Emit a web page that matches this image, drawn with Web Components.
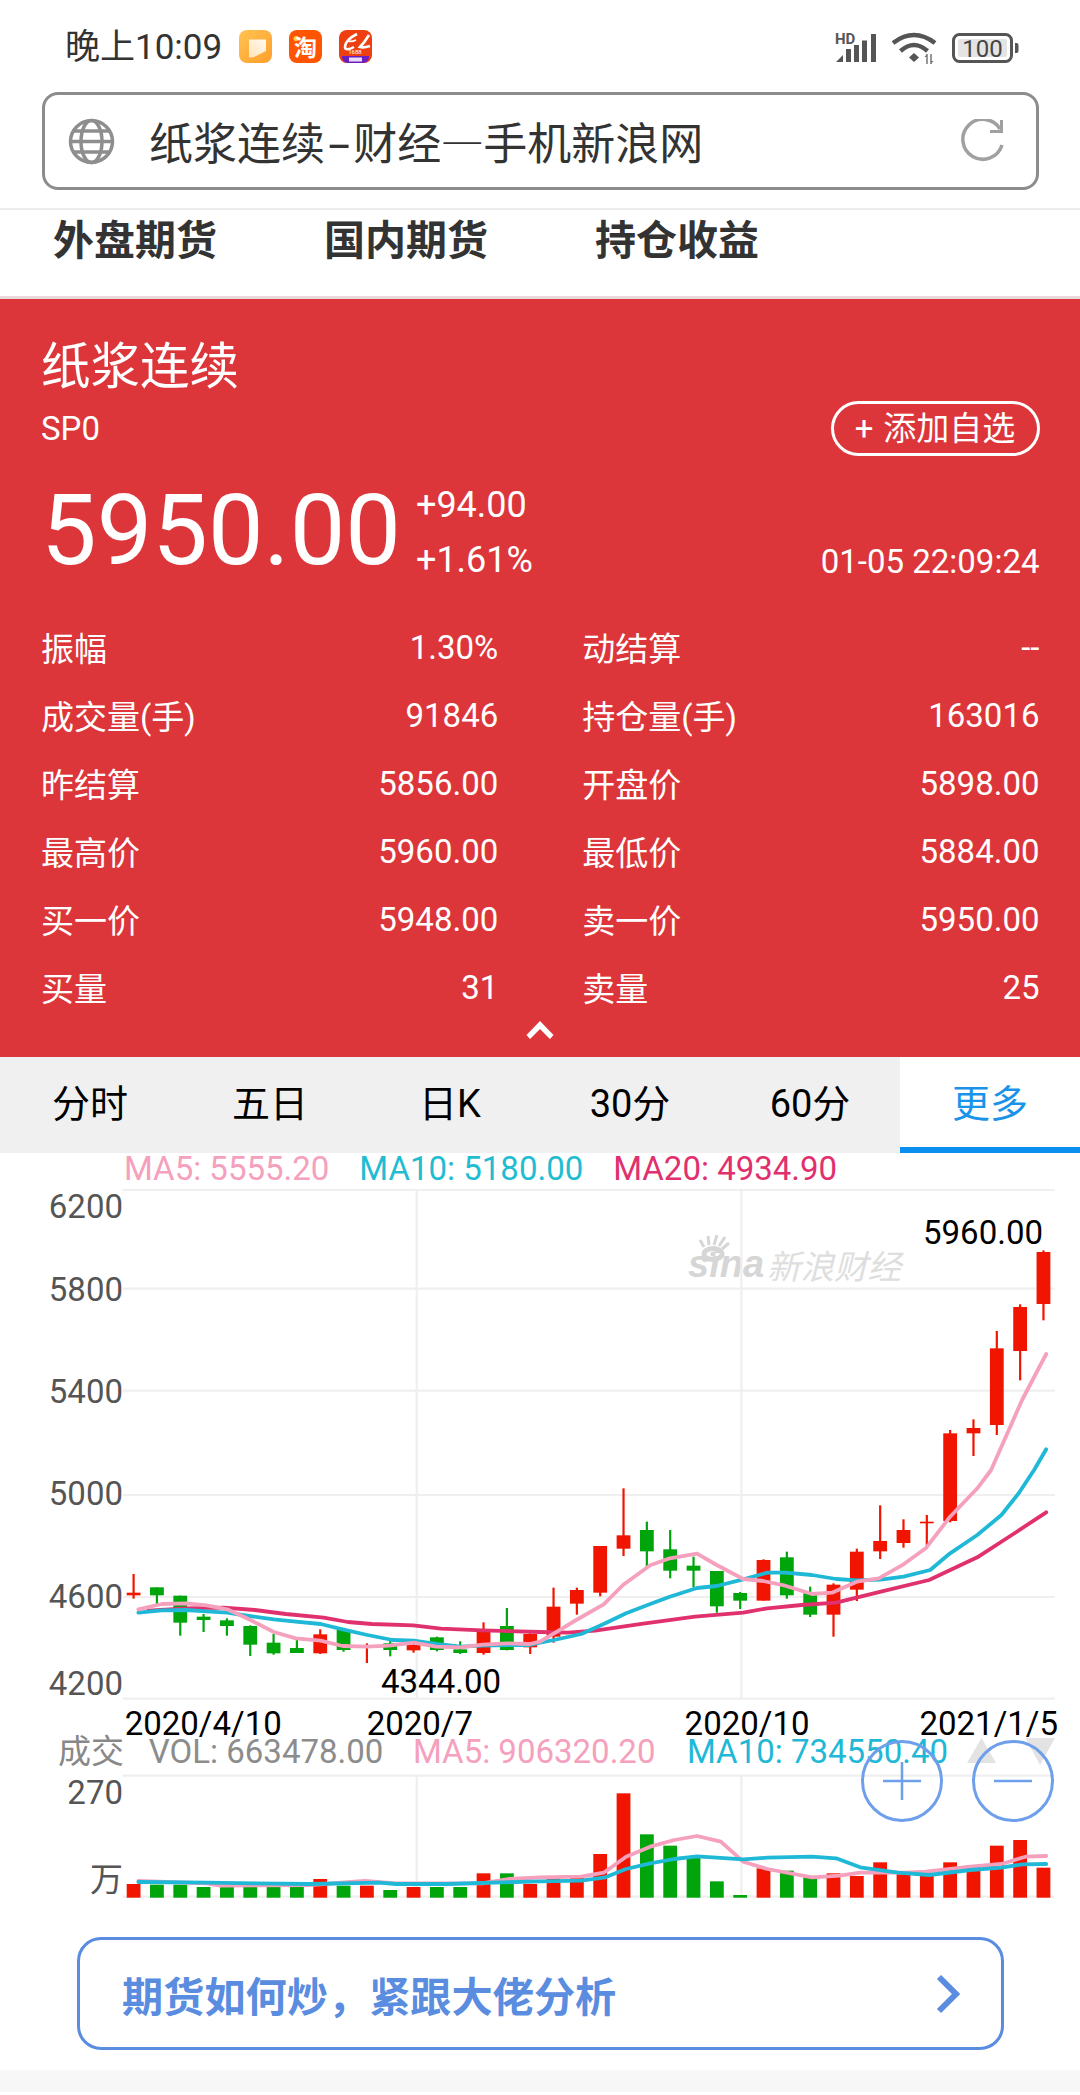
<!DOCTYPE html>
<html lang="zh-CN">
<head>
<meta charset="utf-8">
<title>纸浆连续-财经—手机新浪网</title>
<style>
    html, body {
        margin: 0;
        background: #fff;
        font-family: Roboto, "Noto Sans CJK SC", sans-serif;
    }
    body {
        width: 1080px;
        height: 2095px;
        overflow: hidden;
    }
</style>
</head>
<body>
<status-bar></status-bar>
<address-bar>纸浆连续<span class="dash">-</span>财经<span class="em">—</span>手机新浪网</address-bar>
<market-nav>
    <span>外盘期货</span>
    <span>国内期货</span>
    <span>持仓收益</span>
</market-nav>
<quote-panel>
    <quote-row>振幅<span slot="value">1.30%</span></quote-row>
    <quote-row>动结算<span slot="value">--</span></quote-row>
    <quote-row>成交量(手)<span slot="value">91846</span></quote-row>
    <quote-row>持仓量(手)<span slot="value">163016</span></quote-row>
    <quote-row>昨结算<span slot="value">5856.00</span></quote-row>
    <quote-row>开盘价<span slot="value">5898.00</span></quote-row>
    <quote-row>最高价<span slot="value">5960.00</span></quote-row>
    <quote-row>最低价<span slot="value">5884.00</span></quote-row>
    <quote-row>买一价<span slot="value">5948.00</span></quote-row>
    <quote-row>卖一价<span slot="value">5950.00</span></quote-row>
    <quote-row>买量<span slot="value">31</span></quote-row>
    <quote-row>卖量<span slot="value">25</span></quote-row>
</quote-panel>
<period-tabs>
    <period-tab>分时</period-tab>
    <period-tab>五日</period-tab>
    <period-tab>日K</period-tab>
    <period-tab>30分</period-tab>
    <period-tab>60分</period-tab>
    <period-tab active>更多</period-tab>
</period-tabs>
<kline-chart></kline-chart>
<promo-link>期货如何炒，紧跟大佬分析</promo-link>

<script>
class StatusBar extends HTMLElement
{
    constructor()
    {
        super();
        this.attachShadow({ mode: 'open' });
        this.shadowRoot.innerHTML = `
            <style>
                :host { display: flex; align-items: center; height: 92px; padding: 0 60px 0 65px; box-sizing: border-box; color: #333; }
                .time { font-size: 35px; line-height: 50px; margin: 4px 17px 0 0; }
                .apps { display: flex; gap: 17px; margin-top: 1px; }
                .apps svg { display: block; }
                .right { margin-left: auto; display: flex; align-items: center; gap: 15px; margin-top: 3px; }
                .right svg { display: block; }
                .signal { margin-top: -3px; }
            </style>
            <span class="time">晚上10:09</span>
            <div class="apps">
                <svg width="33" height="33" viewBox="0 0 33 33">
                    <defs><linearGradient id="bk" x1="0" y1="0" x2="1" y2="1"><stop offset="0" stop-color="#ffc352"/><stop offset="1" stop-color="#ff9e2c"/></linearGradient>
                    <linearGradient id="pg" x1="0" y1="1" x2="1" y2="0"><stop offset="0" stop-color="#ffe4b8"/><stop offset="1" stop-color="#fffaf0"/></linearGradient></defs>
                    <rect width="33" height="33" rx="8" fill="url(#bk)"/>
                    <path d="M10 9.500h17v11.500L14 27.500l-4 0z" fill="url(#pg)"/>
                </svg>
                <svg width="33" height="33" viewBox="0 0 33 33">
                    <rect width="33" height="33" rx="8" fill="#ff5500"/>
                    <circle cx="7" cy="8.500" r="2.500" fill="#ffd53c"/>
                    <text x="16.500" y="26" font-size="23" font-weight="700" fill="#fff" text-anchor="middle">淘</text>
                </svg>
                <svg width="33" height="33" viewBox="0 0 33 33">
                    <rect width="33" height="33" rx="8" fill="#ee3f10"/>
                    <path d="M18 4C10 8 6 13 6 17c0 3 4 3 9 0" fill="none" stroke="#fff" stroke-width="2.600"/>
                    <path d="M8 11c4 1 7 0 9-1" fill="none" stroke="#fff" stroke-width="1.800"/>
                    <path d="M30 5c-3 5-6 9-9 12 3 1 7 0 10-1" fill="none" stroke="#fff" stroke-width="2.600"/>
                    <text x="16" y="24" font-size="6" fill="#fff" text-anchor="middle">1688</text>
                    <path d="M3 26h27v1a6 6 0 0 1-6 6H9a6 6 0 0 1-6-6z" fill="#6a1fc0"/>
                    <rect x="10" y="27.500" width="13" height="4" fill="#e9dcf8"/>
                </svg>
            </div>
            <div class="right">
                <svg class="signal" width="42" height="34" viewBox="0 -3 42 34" fill="#555">
                    <text x="0" y="11.500" font-size="15" font-weight="700" fill="#555">HD</text>
                    <path d="M1 30l7-7v7zM11 30V17h5v13zM19 30V13h5v17zM27 30V8.500h5V30zM36 30V2h5v28z"/>
                </svg>
                <svg width="45" height="32" viewBox="0 0 45 32" fill="none" stroke="#555" stroke-width="4.500">
                    <path d="M1 11Q22-5 43 11"/>
                    <path d="M8.500 19Q22 7 35.500 19"/>
                    <path d="M22 21l5 4.500-5 4.500-5-4.500z" fill="#555" stroke="none"/>
                    <path d="M35 22v10M39 22v10" stroke="#777" stroke-width="1.500"/>
                    <path d="M32.500 25l2.500-3v3zM41.500 29l-2.500 3v-3z" fill="#777" stroke="none"/>
                </svg>
                <svg width="68" height="30" viewBox="0 0 68 30">
                    <rect x="1.500" y="1.500" width="58" height="27" rx="6" fill="#fff" stroke="#555" stroke-width="3"/>
                    <rect x="6" y="6" width="49" height="18" rx="2" fill="#e4e4e4"/>
                    <text x="30.500" y="23.500" font-size="24" fill="#444" text-anchor="middle">100</text>
                    <path d="M63 10h1.500a2 2 0 0 1 2 2v6a2 2 0 0 1-2 2H63z" fill="#555"/>
                </svg>
            </div>
        `;
    }
}

class AddressBar extends HTMLElement
{
    constructor()
    {
        super();
        this.attachShadow({ mode: 'open' });
        this.shadowRoot.innerHTML = `
            <style>
                :host { display: block; padding: 0 41px 18px 41.500px; }
                .box {
                    display: flex; align-items: center; height: 98px; box-sizing: border-box;
                    border: 3px solid #8c8c8c; border-radius: 16px; padding: 0 32px 0 23px;
                }
                .box svg { display: block; flex: none; }
                .title { flex: 1; font-size: 44px; line-height: 60px; color: #333; margin-left: 34.500px; padding-top: 3px; white-space: nowrap; }
                ::slotted(.dash) { display: inline-block; margin: 0 8px; transform: scaleX(1.800); }
                ::slotted(.em) { font-family: "Noto Sans CJK SC", sans-serif; margin: 0 -1px; }
            </style>
            <div class="box">
                <svg width="47" height="47" viewBox="0 0 47 47" fill="none" stroke="#8e8e8e" stroke-width="3.500">
                    <circle cx="23.500" cy="23.500" r="21"/>
                    <ellipse cx="23.500" cy="23.500" rx="10.500" ry="21"/>
                    <path d="M2.500 23.500h42M6 13h35M6 34h35"/>
                </svg>
                <span class="title"><slot></slot></span>
                <svg width="45" height="45" viewBox="0 0 45 45" fill="none" stroke="#a0a0a0" stroke-width="3.500">
                    <path d="M41 10A20 20 0 1 0 43 26"/>
                    <path d="M42.500 1v11.500H31" stroke-width="3"/>
                </svg>
            </div>
        `;
    }
}

class MarketNav extends HTMLElement
{
    constructor()
    {
        super();
        this.attachShadow({ mode: 'open' });
        this.shadowRoot.innerHTML = `
            <style>
                :host {
                    display: flex; gap: 107px; height: 86px; padding: 0 0 0 53px;
                    border-top: 2px solid #ececec; border-bottom: 3px solid #e8dada;
                    font-size: 41px; font-weight: 700; line-height: 62px; color: #333;
                }
                ::slotted(span) { display: block; }
            </style>
            <slot></slot>
        `;
    }
}

class QuotePanel extends HTMLElement
{
    constructor()
    {
        super();
        this.attachShadow({ mode: 'open' });
        this.shadowRoot.innerHTML = `
            <style>
                :host { display: block; background: #dd363a; color: #fff; padding: 38px 40.500px 0 41px; height: 758px; box-sizing: border-box; }
                .title { font-size: 49.500px; line-height: 60px; }
                .code-row { display: flex; justify-content: space-between; align-items: center; margin-top: 4px; height: 55px; }
                .code { font-size: 33px; }
                .follow {
                    display: flex; align-items: center; gap: 10px; width: 209px; height: 55px; box-sizing: border-box; justify-content: center;
                    border: 3px solid #fff; border-radius: 28px; font-size: 33px; line-height: 1;
                }
                .price-row { display: flex; margin-top: 16px; height: 116px; }
                .price { font-size: 99px; line-height: 116px; }
                .change { display: flex; flex-direction: column; font-size: 36px; line-height: 55px; margin: 6px 0 0 15px; }
                .stamp { margin-left: auto; align-self: flex-end; font-size: 33px; line-height: 52px; }
                .table { display: grid; grid-template-columns: 1fr 1fr; column-gap: 84px; grid-auto-rows: 68px; margin-top: 25px; }
                .fold { display: block; margin: 0 auto; }
            </style>
            <div class="title">纸浆连续</div>
            <div class="code-row">
                <span class="code">SP0</span>
                <span class="follow"><span>+</span><span>添加自选</span></span>
            </div>
            <div class="price-row">
                <span class="price">5950.00</span>
                <span class="change"><span>+94.00</span><span>+1.61%</span></span>
                <span class="stamp">01-05 22:09:24</span>
            </div>
            <div class="table"><slot></slot></div>
            <svg class="fold" width="28" height="18" viewBox="0 0 28 18"><path d="M14 0l13.500 14-3.500 4L14 8 4 18 .5 14z" fill="#fff"/></svg>
        `;
    }
}

class QuoteRow extends HTMLElement
{
    constructor()
    {
        super();
        this.attachShadow({ mode: 'open' });
        this.shadowRoot.innerHTML = `
            <style>
                :host { display: flex; justify-content: space-between; align-items: center; font-size: 33px; }
            </style>
            <span><slot></slot></span>
            <span><slot name="value"></slot></span>
        `;
    }
}

class PeriodTabs extends HTMLElement
{
    constructor()
    {
        super();
        this.attachShadow({ mode: 'open' });
        this.shadowRoot.innerHTML = `
            <style>
                :host { display: grid; grid-template-columns: repeat(6, 1fr); height: 96px; background: #f0f0f0; }
            </style>
            <slot></slot>
        `;
    }
}

class PeriodTab extends HTMLElement
{
    constructor()
    {
        super();
        this.attachShadow({ mode: 'open' });
        this.shadowRoot.innerHTML = `
            <style>
                :host { display: flex; align-items: center; justify-content: center; font-size: 38px; color: #000; padding-bottom: 9px; }
                :host([active]) { background: #fff; color: #1b93e8; border-bottom: 6px solid #0b8fee; padding-bottom: 3px; }
            </style>
            <slot></slot>
        `;
    }
}

class KlineChart extends HTMLElement
{
    // 좌표는 전부 페이지 기준 (viewBox가 1183에서 시작)
    #candles = [
        ['r',312,368,376,386],['g',352,352,376,402],['g',377,377,458,497],['g',432,440,450,486],['g',445,451,468,497],
        ['g',466,468,524,558],['g',492,518,550,554],['g',510,534,549,549],['r',478,493,550,552],['g',478,480,540,545],
        ['r',520,526,532,579],['g',513,520,540,559],['r',515,525,541,548],['g',500,502,540,544],['g',514,538,549,552],
        ['r',457,482,549,554],['g',414,468,540,541],['r',490,492,532,552],['r',353,410,500,518],['r',353,360,401,434],
        ['r',228,228,368,379],['r',55,196,236,258],['g',155,180,244,292],['g',180,238,302,325],['g',260,287,302,352],
        ['g',303,303,409,428],['g',366,369,392,417],['r',268,270,392,392],['g',245,262,376,386],['g',350,370,434,441],
        ['r',340,344,434,500],['r',236,245,359,393],['r',106,213,244,267],['r',148,180,219,233],['r',135,155,160,235],
        ['r',-120,-110,153,157],['r',-152,-126,-110,-42],['r',-417,-365,-135,-105],['r',-497,-489,-357,-269],['r',-659,-654,-498,-449]
    ];

    #volTops = [492,494,494,501,501,501,501,501,477,497,497,510,501,501,501,460,460,492,
        468,468,402,220,343,377,410,484,525,445,452,472,460,468,427,460,468,427,435,377,360,443];

    constructor()
    {
        super();
        this.attachShadow({ mode: 'open' });
        this.#render();
    }

    // 앞쪽 반은 left 크롭, 뒤쪽 반은 right 크롭 기준
    #line(left, right, y0, color, width = 3.8)
    {
        const pts = [
            ...left.map(([x, y]) => `${(x / 2.904).toFixed(1)},${(y0 + y / 3).toFixed(1)}`),
            ...right.map(([x, y]) => `${(540 + x / 2.904).toFixed(1)},${(y0 + y / 3).toFixed(1)}`)
        ];
        return `<polyline points="${pts.join(' ')}" fill="none" stroke="${color}" stroke-width="${width}" stroke-linejoin="round" stroke-linecap="round"/>`;
    }

    #text(x, cy, str, fill, anchor = 'start', size = 33)
    {
        return `<text x="${x}" y="${cy + size * 0.355}" font-size="${size}" fill="${fill}" text-anchor="${anchor}">${str}</text>`;
    }

    #plot()
    {
        const colors = { r: '#f11500', g: '#00a50c' };
        const y = z => 1470 + z / 3;
        let out = '';

        this.#candles.forEach(([c, wt, bt, bb, wb], i) =>
        {
            const cx = 133.6 + i * 23.33;
            out += `<rect x="${cx - 1.1}" y="${y(wt)}" width="2.2" height="${(wb - wt) / 3}" fill="${colors[c]}"/>`;
            out += `<rect x="${cx - 6.9}" y="${y(bt)}" width="13.8" height="${(bb - bt) / 3}" fill="${colors[c]}"/>`;
        });

        out += this.#line(
            [[430,422],[540,415],[650,413],[740,420],[830,432],[940,443],[1010,456],[1080,462],[1200,466],[1280,476],[1400,481],[1568,486]],
            [[80,488],[160,482],[300,461],[450,440],[590,428],[660,415],[760,405],[860,398],[990,365],[1130,330],[1270,262],[1370,195],[1470,127]],
            1470, '#e0306e');
        out += this.#line(
            [[402,428],[470,421],[540,420],[600,424],[660,428],[723,438],[795,448],[859,455],[931,462],[995,478],[1067,495],[1140,510],[1202,512],[1266,522],[1338,530],[1402,527],[1474,525],[1538,525]],
            [[0,518],[41,510],[120,492],[185,462],[250,430],[320,402],[377,380],[456,354],[513,348],[590,328],[660,308],[712,308],[790,315],[860,327],[920,331],[990,329],[1056,320],[1133,300],[1191,250],[1270,195],[1340,135],[1390,70],[1435,0],[1470,-62]],
            1470, '#1fb8d6');
        out += this.#line(
            [[402,418],[470,402],[540,400],[600,406],[660,418],[723,448],[795,486],[859,505],[931,512],[995,528],[1067,530],[1130,527],[1202,518],[1266,530],[1338,532],[1402,524],[1474,520],[1538,522]],
            [[0,515],[41,490],[105,450],[185,403],[241,345],[320,286],[377,265],[456,251],[513,285],[590,327],[648,333],[712,347],[790,372],[848,368],[920,335],[984,325],[1056,283],[1120,235],[1191,140],[1270,55],[1310,0],[1400,-210],[1470,-348]],
            1470, '#f5a0bc');
        return out;
    }

    #volume()
    {
        const colors = { r: '#f11500', g: '#00a50c' };
        let out = '';
        this.#volTops.forEach((top, i) =>
        {
            const cx = 133.6 + i * 23.33;
            const yTop = 1720 + top / 3;
            out += `<rect x="${cx - 6.9}" y="${yTop}" width="13.8" height="${1897.7 - yTop}" fill="${colors[this.#candles[i][0]]}"/>`;
        });
        out += this.#line(
            [[402,483],[600,490],[640,497],[900,495],[1060,483],[1150,490],[1400,490],[1480,477]],
            [[0,472],[120,470],[185,458],[250,410],[320,380],[390,360],[456,348],[525,365],[590,425],[660,447],[790,472],[870,467],[930,458],[1060,458],[1120,455],[1250,440],[1340,432],[1410,410],[1470,408]],
            1720, '#f5a0bc');
        out += this.#line(
            [[402,486],[600,488],[900,492],[1100,488],[1150,492],[1300,492]],
            [[0,484],[120,482],[190,472],[250,447],[320,430],[390,417],[456,409],[590,418],[660,413],[790,410],[860,415],[930,442],[1040,458],[1130,465],[1250,450],[1340,443],[1400,433],[1470,432]],
            1720, '#1fb8d6');
        return out;
    }

    #grid()
    {
        const h = [1190, 1288.7, 1390.7, 1495, 1597, 1698.7, 1775.7, 1896.7]
            .map(y => `<path d="M122.600 ${y}H1054.800"/>`).join('');
        const v = [416.7, 741.4]
            .map(x => `<path d="M${x} 1190V1698.700M${x} 1775.700V1896.700"/>`).join('');
        return `<g stroke="#efefef" stroke-width="2.200" fill="none">${h}${v}</g>`;
    }

    #watermark()
    {
        return `
            <g>
                <g fill="none" stroke="#d6d6d6">
                    <ellipse cx="713" cy="1254" rx="9" ry="5.500" stroke-width="5"/>
                    <path d="M704 1247l-4-7M709 1245l-1-9M714 1245l3-10M719 1246l6-9M722 1249l7-6" stroke-width="3"/>
                </g>
                <circle cx="713" cy="1254" r="2.500" fill="#d6d6d6"/>
                <text x="688" y="1277" font-family="'Liberation Sans', sans-serif" font-size="38" font-style="italic" font-weight="700" fill="#d6d6d6">sina</text>
                <text x="767" y="1279" font-size="33.500" font-style="italic" fill="#dedede">新浪财经</text>
            </g>
        `;
    }

    #labels()
    {
        const axis = [['6200',1206.7],['5800',1289],['5400',1391.7],['5000',1493],['4600',1596.7],['4200',1683],['270',1792.7],['万',1879]]
            .map(([s, cy]) => this.#text(123, cy, s, '#555', 'end')).join('');
        return axis
            + this.#text(923, 1232.7, '5960.00', '#000')
            + this.#text(381, 1681.7, '4344.00', '#000')
            + this.#text(124.7, 1723, '2020/4/10', '#000')
            + this.#text(366.7, 1723, '2020/7', '#000')
            + this.#text(684.6, 1723, '2020/10', '#000')
            + this.#text(1058, 1723, '2021/1/5', '#000', 'end')
            + this.#text(58, 1751.7, '成交', '#888')
            + this.#text(148.8, 1751.7, 'VOL: 663478.00', '#8c8c8c')
            + this.#text(413, 1751.7, 'MA5: 906320.20', '#f5a0bc')
            + this.#text(687, 1751.7, 'MA10: 734550.40', '#1fb8d6');
    }

    #render()
    {
        this.shadowRoot.innerHTML = `
            <style>
                :host { display: block; position: relative; height: 784px; }
                .legend { display: flex; gap: 30px; height: 30px; padding-left: 124px; font-size: 33px; line-height: 32px; }
                .ma5 { color: #f5a0bc; }
                .ma10 { color: #1fbcd2; }
                .ma20 { color: #e0306e; }
                svg.chart { display: block; }
                .zoom {
                    position: absolute; top: 587px; width: 82px; height: 82px; box-sizing: border-box;
                    border: 3px solid #6e9fea; border-radius: 50%; display: flex; align-items: center; justify-content: center;
                }
                .zoom.in { left: 861px; }
                .zoom.out { left: 971.500px; }
            </style>
            <div class="legend">
                <span class="ma5">MA5: 5555.20</span>
                <span class="ma10">MA10: 5180.00</span>
                <span class="ma20">MA20: 4934.90</span>
            </div>
            <svg class="chart" width="1080" height="754" viewBox="0 1183 1080 754">
                ${this.#watermark()}
                ${this.#grid()}
                ${this.#plot()}
                ${this.#volume()}
                ${this.#labels()}
                <path d="M981.500 1738L996 1763H967zM1025.500 1738H1055L1040 1765z" fill="#e3e3e3"/>
            </svg>
            <span class="zoom in"><svg width="40" height="40" viewBox="0 0 40 40"><path d="M1 20h38M20 1v38" stroke="#6e9fea" stroke-width="2.500"/></svg></span>
            <span class="zoom out"><svg width="40" height="40" viewBox="0 0 40 40"><path d="M1 20h38" stroke="#6e9fea" stroke-width="2.500"/></svg></span>
        `;
    }
}

class PromoLink extends HTMLElement
{
    constructor()
    {
        super();
        this.attachShadow({ mode: 'open' });
        this.shadowRoot.innerHTML = `
            <style>
                :host { display: block; }
                .wrap { padding: 0 76px 20px 77px; }
                .box {
                    display: flex; align-items: center; justify-content: space-between; height: 113px; box-sizing: border-box;
                    border: 3px solid #5a8ce0; border-radius: 24px; padding: 0 41px 0 42px;
                    color: #5a8ce0; font-size: 41.200px; font-weight: 700;
                }
                .box svg { display: block; }
                .band { height: 22px; background: #f7f7f7; }
            </style>
            <div class="wrap">
                <div class="box">
                    <span><slot></slot></span>
                    <svg width="24" height="40" viewBox="0 0 24 40"><path d="M3 3l17 17L3 37" fill="none" stroke="#5a8ce0" stroke-width="6"/></svg>
                </div>
            </div>
            <div class="band"></div>
        `;
    }
}

customElements.define('status-bar', StatusBar);
customElements.define('address-bar', AddressBar);
customElements.define('market-nav', MarketNav);
customElements.define('quote-panel', QuotePanel);
customElements.define('quote-row', QuoteRow);
customElements.define('period-tabs', PeriodTabs);
customElements.define('period-tab', PeriodTab);
customElements.define('kline-chart', KlineChart);
customElements.define('promo-link', PromoLink);
</script>
</body>
</html>
